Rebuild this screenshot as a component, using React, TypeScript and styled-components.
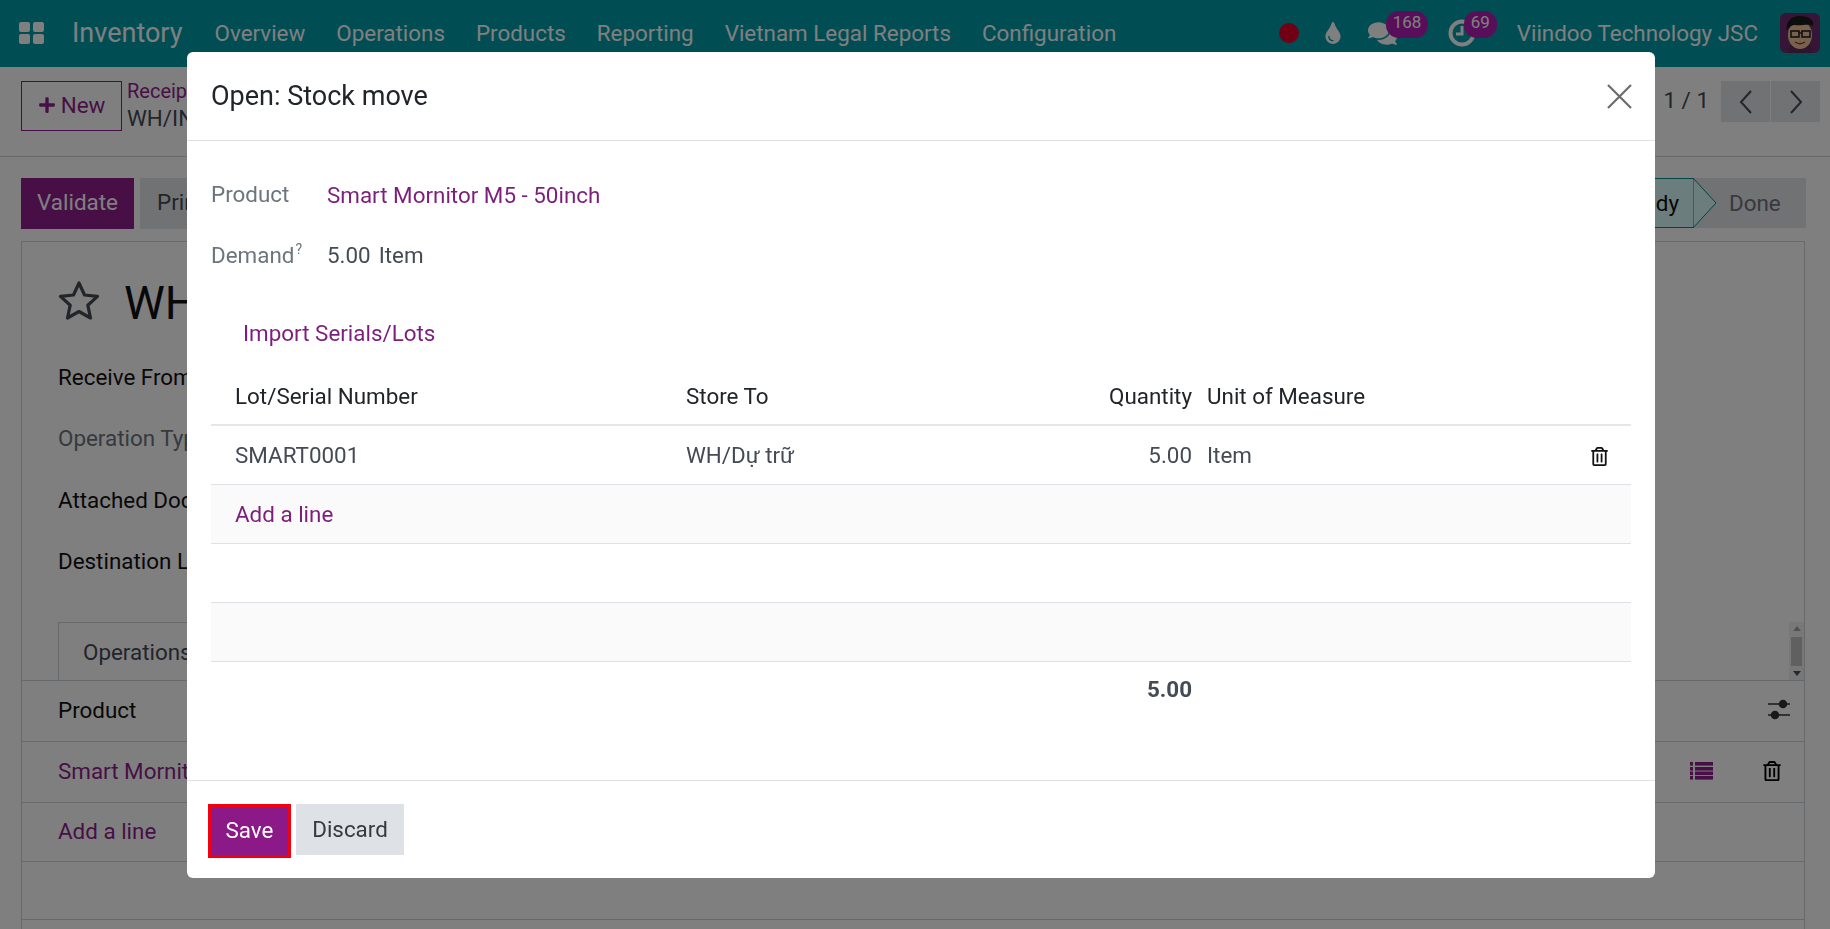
import React from "react";
import styled, { createGlobalStyle } from "styled-components";
import { FaComments, FaPlus, FaRegTrashAlt, FaTint } from "react-icons/fa";

const Global = createGlobalStyle`
  html, body { margin: 0; padding: 0; height: 100%; overflow: hidden; background: #fff; }
  body { font-family: Roboto, "Liberation Sans", sans-serif; font-size: 22.4px; color: #444b54; }
  * { box-sizing: border-box; }
`;

const Page = styled.div`display: flex; flex-direction: column; height: 929px; overflow: hidden;`;

const Navbar = styled.header`
  display: flex; align-items: center; height: 67px; flex: none; padding: 0 10px 1px 19px; background: #019aa8; color: #fff;
`;
const Brand = styled.span`font-size: 27px; margin-left: 28px; margin-right: 32px; white-space: nowrap;`;
const NavItem = styled.span`margin-right: 31px; white-space: nowrap;`;
const NavRight = styled.div`display: flex; align-items: center; margin-left: auto;`;
const RedDot = styled.span`width: 20px; height: 20px; border-radius: 50%; background: #e00029; margin-right: 23px;`;
const NavIcon = styled.span`position: relative; display: flex; margin-right: ${(p: { $mr: number }) => p.$mr}px;`;
const Badge = styled.span`
  position: absolute; top: -8px; left: ${(p: { $left: number }) => p.$left}px; min-width: 24px; height: 27px; padding: 0 7px; border-radius: 13px;
  background: #b11db0; color: #fff; font-size: 17px; line-height: 22px; text-align: center;
`;
const UserName = styled.span`white-space: nowrap; margin-right: 22px;`;

const ControlPanel = styled.div`
  display: flex; align-items: flex-start; height: 90px; flex: none; padding: 14px 10px 0 21px; border-bottom: 1px solid #ced4da;
`;
const NewButton = styled.button`
  display: flex; align-items: center; justify-content: center; gap: 5px; width: 101px; height: 50px; background: #fff; border: 1px solid #8f1f8d; color: #8f1f8d;
  font: inherit; padding: 0 0 2px;
`;
const Breadcrumb = styled.div`margin-left: 5px; display: flex; flex-direction: column; line-height: 27px; margin-top: -3px;`;
const Crumb = styled.span`color: #8f1f8d; font-size: 20px;`;
const Pager = styled.div`display: flex; align-items: center; margin-left: auto;`;
const PagerText = styled.span`margin-right: 11px; margin-top: -4px;`;
const PagerBtn = styled.span`
  display: flex; align-items: center; justify-content: center; width: 49px; height: 41px; background: #e2e4e8; margin-left: 1px; color: #444b54;
`;

const StatusRow = styled.div`display: flex; align-items: flex-start; height: 84px; flex: none; padding: 21px 24px 0 21px;`;
const Primary = styled.button`
  width: 113px; height: 51px; background: #8f1f8d; color: #fff; border: 0; font: inherit; padding: 0 0 3px;
`;
const Secondary = styled.button`
  width: 100px; height: 51px; margin-left: 6px; background: #e2e4e8; color: #444b54; border: 0; font: inherit; padding: 0 0 3px 17px; text-align: left;
`;
const StatusGroup = styled.div`display: flex; align-items: center; margin-left: auto;`;
const ReadyStep = styled.span`
  position: relative; display: flex; align-items: center; justify-content: flex-end; width: 134px; height: 50px; padding-right: 14px;
  background: #d8fafa; border: 1px solid #018a90; color: #111;
`;
const StepArrow = styled.svg`position: absolute; left: 100%; top: -1px; width: 24px; height: 50px;`;
const DoneStep = styled.span`
  display: flex; align-items: center; width: 112px; height: 50px; padding-left: 35px; background: #e2e4e8; color: #6c757d;
`;

const Sheet = styled.section`flex: 1; margin: 0 25px 0 21px; border: 1px solid #ced4da; border-bottom: 0; display: flex; flex-direction: column;`;
const TitleRow = styled.div`display: flex; align-items: center; height: 92px; margin-top: 12px; padding-left: 36px; gap: 24px;`;
const SheetTitle = styled.h1`margin: 6px 0 0; font-size: 46px; font-weight: 400; color: #111; white-space: nowrap;`;
const FieldLine = styled.div`height: 61.5px; flex: none; display: flex; align-items: center; padding-left: 36px; color: ${(p: { $muted?: boolean }) => (p.$muted ? "#6c757d" : "#111")};`;
const TabRow = styled.div`display: flex; height: 59px; flex: none; margin-top: 30px; border-bottom: 1px solid #ced4da;`;
const Tab = styled.div`margin-left: 36px; padding-left: 24px; width: 170px; border: 1px solid #ced4da; border-bottom: 0; display: flex; align-items: center;`;
const Scrollbar = styled.div`
  margin-left: auto; align-self: flex-end; width: 15px; height: 58px; display: flex; flex-direction: column; align-items: center; justify-content: space-between; padding: 4px 0;
  background: #f1f1f1;
`;
const ScrollThumb = styled.span`width: 11px; height: 29px; background: #c1c1c1;`;
const ScrollArrow = styled.span`
  width: 0; height: 0; border-left: 4px solid transparent; border-right: 4px solid transparent;
  ${(p: { $up?: boolean }) => (p.$up ? "border-bottom: 5px solid #a3a3a3;" : "border-top: 5px solid #505050;")}
`;
const ListRow = styled.div`
  display: flex; align-items: center; height: ${(p: { $h: number }) => p.$h}px; flex: none; padding: 0 22px 2px 36px; border-bottom: 1px solid #ced4da; color: #111;
`;
const ListLink = styled.span`color: #8f1f8d;`;
const ListIcons = styled.div`margin-left: auto; display: flex; align-items: center; gap: 49px;`;
const SliderIcons = styled(ListIcons)`margin-right: -9px;`;

const Backdrop = styled.div`position: fixed; inset: 0; background: rgba(0, 0, 0, 0.5);`;
const Modal = styled.div`
  position: fixed; left: 187px; top: 52px; width: 1468px; height: 826px; display: flex; flex-direction: column;
  background: #fff; border-radius: 6px; overflow: hidden;
`;
const ModalHeader = styled.div`display: flex; align-items: center; justify-content: space-between; height: 89px; flex: none; padding: 0 23px 0 24px; border-bottom: 1px solid #dee2e6;`;
const ModalTitle = styled.h4`margin: 0; font-size: 27px; font-weight: 400; color: #212529;`;
const ModalBody = styled.div`flex: 1; padding: 0 24px;`;
const InfoRow = styled.div`display: flex; align-items: center; height: 61px;`;
const InfoFirst = styled(InfoRow)`margin-top: 22px;`;
const InfoLabel = styled.span`width: 116px; color: #6c757d;`;
const InfoSup = styled.sup`font-size: 14px; line-height: 0; margin-left: 1px;`;
const InfoLink = styled.span`color: #7c1f7a; margin-top: 2px;`;
const InfoValue = styled.span`margin-right: 8px;`;
const ImportLink = styled.div`color: #7c1f7a; margin: 36px 0 0 32px; height: 24px; line-height: 24px;`;
const Table = styled.table`width: 100%; margin-top: 22px; border-collapse: collapse; table-layout: fixed;`;
const HeadCell = styled.th<{ $right?: boolean; $first?: boolean }>`
  height: 58px; padding: 0 ${(p) => (p.$right ? "7px" : "0")} 0 ${(p) => (p.$first ? "24px" : p.$right ? "0" : "8px")};
  font-weight: 400; color: #212529; text-align: ${(p) => (p.$right ? "right" : "left")}; border-bottom: 2px solid #e4e6ea;
`;
const Row = styled.tr<{ $odd?: boolean }>`height: 59px; background: ${(p) => (p.$odd ? "#fafafa" : "#fff")};`;
const Cell = styled.td<{ $right?: boolean; $first?: boolean; $bold?: boolean }>`
  padding: 0 ${(p) => (p.$right ? "7px" : "0")} 0 ${(p) => (p.$first ? "24px" : p.$right ? "0" : "8px")};
  text-align: ${(p) => (p.$right ? "right" : "left")}; border-bottom: 1px solid #dee2e6; font-weight: ${(p) => (p.$bold ? 700 : 400)};
`;
const FootCell = styled.td<{ $right?: boolean }>`
  height: 56px; padding: 0 ${(p) => (p.$right ? "7px" : "0")} 0 0; text-align: right; font-weight: 700; border-top: 1px solid #dee2e6;
`;
const AddLink = styled.span`color: #7c1f7a;`;
const TrashCell = styled(Cell)`text-align: right; padding-right: 22px; color: #111; svg { vertical-align: middle; }`;
const ModalFooter = styled.div`display: flex; align-items: flex-start; gap: 8px; height: 98px; flex: none; padding: 23px 21px 0 21px; border-top: 1px solid #dee2e6;`;
const SaveBtn = styled.button`
  width: 83px; height: 54px; background: #8b1a88; color: #fff; border: 3px solid #f00010; font: inherit; padding: 0 0 3px;
`;
const DiscardBtn = styled.button`
  width: 108px; height: 51px; background: #dee2e6; color: #343a40; border: 0; font: inherit; padding: 0 0 2px; margin-left: -3px;
`;

const AppsIcon = () => (
  <svg width="25" height="22" viewBox="0 0 25 22" fill="#fff">
    <rect x="0" y="0" width="11" height="10" rx="2" /><rect x="14" y="0" width="11" height="10" rx="2" />
    <rect x="0" y="12" width="11" height="10" rx="2" /><rect x="14" y="12" width="11" height="10" rx="2" />
  </svg>
);
const ClockIcon = () => (
  <svg width="28" height="28" viewBox="0 0 28 28" fill="none" stroke="#fff" strokeWidth="4">
    <circle cx="14" cy="14" r="11.5" /><path d="M14 7v8h-6" strokeWidth="3" />
  </svg>
);
const Avatar = () => (
  <svg width="40" height="40" viewBox="0 0 40 40">
    <rect width="40" height="40" rx="6" fill="#6f2a6e" />
    <path d="M8 36c0-4 6-5 12-5s12 1 12 5v4H8z" fill="#5a2a5a" />
    <ellipse cx="20" cy="22" rx="12" ry="14" fill="#f0c39a" />
    <path d="M7 18C5 7 13 3 20 3c8 0 15 4 13 10-5-3-11 0-18-1-2 0-6 1-8 6z" fill="#1a1a1a" />
    <rect x="11" y="18" width="8" height="6" fill="none" stroke="#222" strokeWidth="1.6" />
    <rect x="22" y="18" width="8" height="6" fill="none" stroke="#222" strokeWidth="1.6" />
    <path d="M19 20h3" stroke="#222" strokeWidth="1.4" />
    <path d="M15 29c3 2 7 2 10 0" fill="none" stroke="#7a3a2a" strokeWidth="1.4" />
  </svg>
);
const Star = () => (
  <svg width="42" height="40" viewBox="0 0 42 40" fill="none" stroke="#444b54" strokeWidth="3.2">
    <path d="M21 3l5.5 12 13 1.4-9.7 8.8 2.7 12.8L21 31.500 9.500 38l2.700-12.800L2.500 16.400l13-1.400z" strokeLinejoin="round" />
  </svg>
);
const Chevron = ({ d }: { d: string }) => (
  <svg width="16" height="26" viewBox="0 0 16 26" fill="none" stroke="#444b54" strokeWidth="2"><path d={d} /></svg>
);
const Sliders = () => (
  <svg width="24" height="22" viewBox="0 0 24 22" stroke="#333" strokeWidth="1.500" fill="#333">
    <path d="M1 5h22M1 16h22" /><circle cx="16" cy="5" r="3.500" /><circle cx="8" cy="16" r="3.500" />
  </svg>
);
const ListGlyph = () => (
  <svg width="23" height="18" viewBox="0 0 23 18" fill="#8f1f8d">
    {[0, 5, 9.5, 14].map((y) => (
      <g key={y}><rect x="0" y={y} width="3" height="3.600" /><rect x="5" y={y} width="18" height="3.600" /></g>
    ))}
  </svg>
);
const CloseIcon = () => (
  <svg width="25" height="25" viewBox="0 0 25 25" stroke="#6c6c6c" strokeWidth="2.200"><path d="M1 1l23 23M24 1L1 24" /></svg>
);

export default function App() {
  return (
    <>
      <Global />
      <Page>
        <Navbar>
          <AppsIcon />
          <Brand>Inventory</Brand>
          {["Overview", "Operations", "Products", "Reporting", "Vietnam Legal Reports", "Configuration"].map((t) => (
            <NavItem key={t}>{t}</NavItem>
          ))}
          <NavRight>
            <RedDot />
            <NavIcon $mr={24}><FaTint size={22} /></NavIcon>
            <NavIcon $mr={51}><FaComments size={29} /><Badge $left={18}>168</Badge></NavIcon>
            <NavIcon $mr={41}><ClockIcon /><Badge $left={16}>69</Badge></NavIcon>
            <UserName>Viindoo Technology JSC</UserName>
            <Avatar />
          </NavRight>
        </Navbar>
        <ControlPanel>
          <NewButton><FaPlus size={18} />New</NewButton>
          <Breadcrumb><Crumb>Receipts</Crumb><span>WH/IN/00001</span></Breadcrumb>
          <Pager>
            <PagerText>1 / 1</PagerText>
            <PagerBtn><Chevron d="M13 2L3 13l10 11" /></PagerBtn>
            <PagerBtn><Chevron d="M3 2l10 11L3 24" /></PagerBtn>
          </Pager>
        </ControlPanel>
        <StatusRow>
          <Primary>Validate</Primary>
          <Secondary>Print</Secondary>
          <StatusGroup>
            <ReadyStep>Ready
              <StepArrow viewBox="0 0 24 50"><path d="M0 0l23 25L0 50z" fill="#d8fafa" stroke="#018a90" strokeWidth="1" /></StepArrow>
            </ReadyStep>
            <DoneStep>Done</DoneStep>
          </StatusGroup>
        </StatusRow>
        <Sheet>
          <TitleRow><Star /><SheetTitle>WH/IN/00001</SheetTitle></TitleRow>
          <FieldLine>Receive From</FieldLine>
          <FieldLine $muted>Operation Type</FieldLine>
          <FieldLine>Attached Documents</FieldLine>
          <FieldLine>Destination Location</FieldLine>
          <TabRow>
            <Tab>Operations</Tab>
            <Scrollbar><ScrollArrow $up /><ScrollThumb /><ScrollArrow /></Scrollbar>
          </TabRow>
          <ListRow $h={61}>Product<SliderIcons><Sliders /></SliderIcons></ListRow>
          <ListRow $h={61}><ListLink>Smart Mornitor M5 - 50inch</ListLink>
            <ListIcons><ListGlyph /><FaRegTrashAlt size={20} color="#000" /></ListIcons>
          </ListRow>
          <ListRow $h={59}><ListLink>Add a line</ListLink></ListRow>
          <ListRow $h={58} />
        </Sheet>
      </Page>
      <Backdrop />
      <Modal>
        <ModalHeader><ModalTitle>Open: Stock move</ModalTitle><CloseIcon /></ModalHeader>
        <ModalBody>
          <InfoFirst><InfoLabel>Product</InfoLabel><InfoLink>Smart Mornitor M5 - 50inch</InfoLink></InfoFirst>
          <InfoRow><InfoLabel>Demand<InfoSup>?</InfoSup></InfoLabel><InfoValue>5.00</InfoValue><span>Item</span></InfoRow>
          <ImportLink>Import Serials/Lots</ImportLink>
          <Table>
            <colgroup><col width="467" /><col width="323" /><col width="198" /><col width="360" /><col width="72" /></colgroup>
            <thead><tr><HeadCell $first>Lot/Serial Number</HeadCell><HeadCell>Store To</HeadCell><HeadCell $right>Quantity</HeadCell><HeadCell>Unit of Measure</HeadCell><HeadCell /></tr></thead>
            <tbody>
              <Row><Cell $first>SMART0001</Cell><Cell>WH/Dự trữ</Cell><Cell $right>5.00</Cell><Cell>Item</Cell><TrashCell><FaRegTrashAlt size={19} /></TrashCell></Row>
              <Row $odd><Cell $first colSpan={5}><AddLink>Add a line</AddLink></Cell></Row>
              <Row><Cell colSpan={5} /></Row>
              <Row $odd><Cell colSpan={5} /></Row>
            </tbody>
            <tfoot><tr><FootCell colSpan={3} $right>5.00</FootCell><FootCell colSpan={2} /></tr></tfoot>
          </Table>
        </ModalBody>
        <ModalFooter><SaveBtn>Save</SaveBtn><DiscardBtn>Discard</DiscardBtn></ModalFooter>
      </Modal>
    </>
  );
}
